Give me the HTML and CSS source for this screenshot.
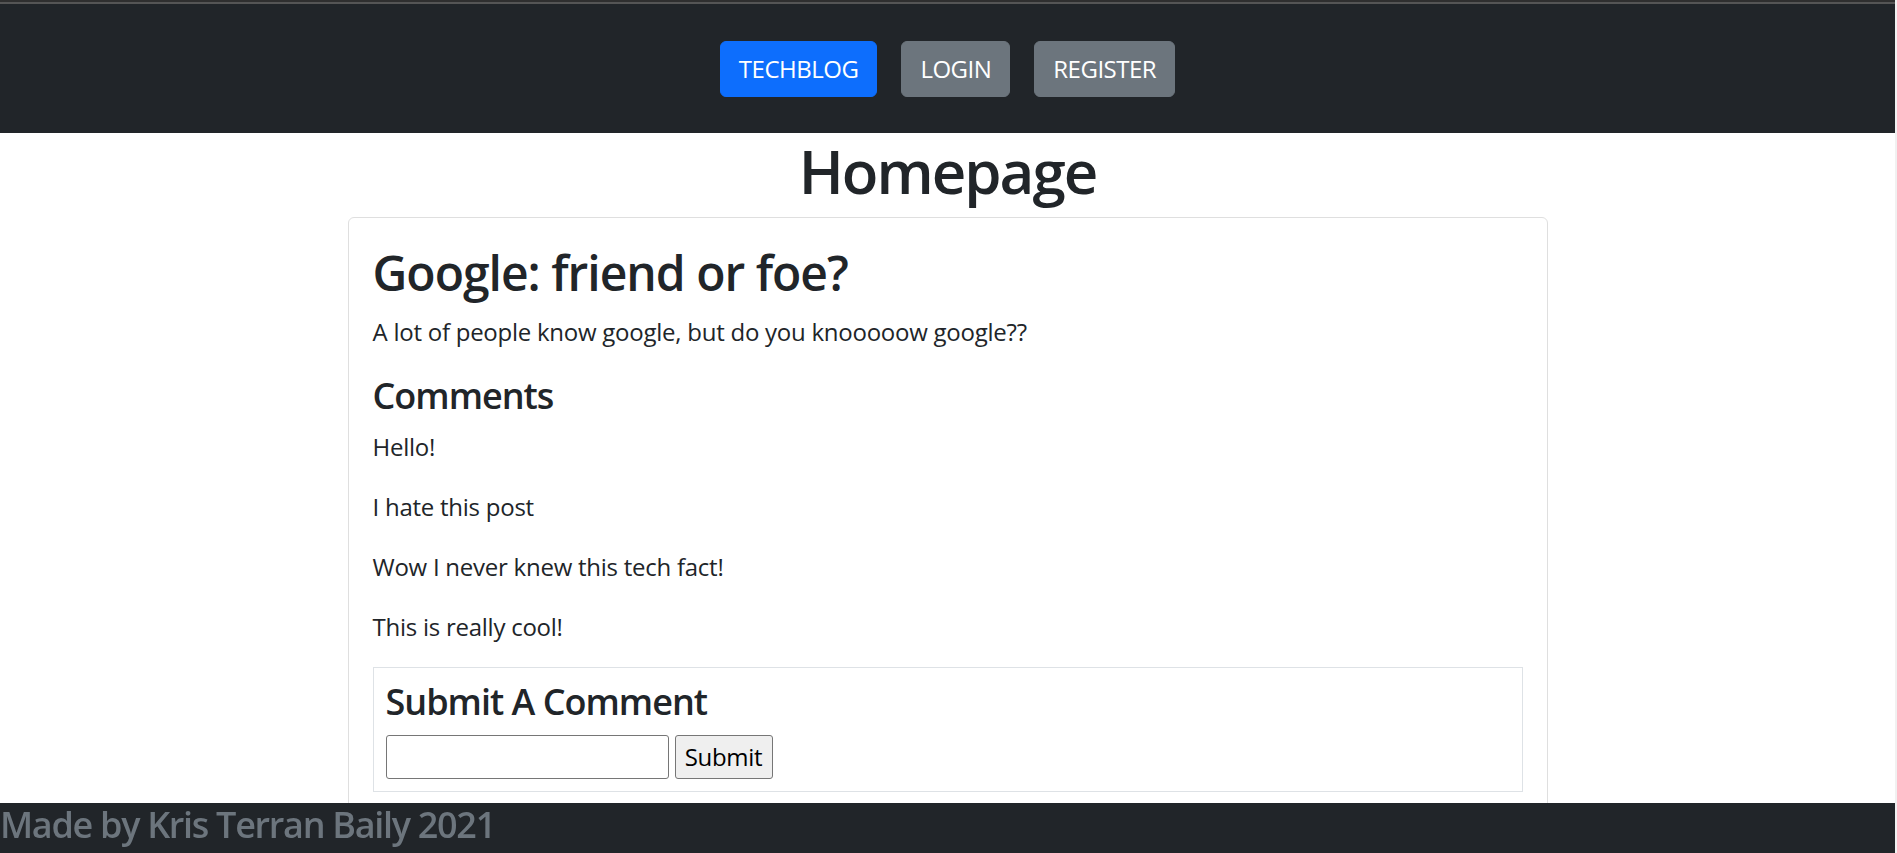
FILE: index.html
```html
<!DOCTYPE html>
<html lang="en">
<head>
<meta charset="utf-8">
<title>Tech Blog</title>
<link rel="stylesheet" href="styles.css">
</head>
<body>
<div class="chrome-top"></div>
<nav class="navbar">
  <a class="btn btn-primary" href="#">TECHBLOG</a>
  <a class="btn btn-secondary" href="#">LOGIN</a>
  <a class="btn btn-secondary" href="#">REGISTER</a>
</nav>
<main class="page">
  <h1 class="page-title">Homepage</h1>
  <article class="card">
    <div class="card-body">
      <h2 class="post-title">Google: friend or foe?</h2>
      <p class="text">A lot of people know google, but do you knooooow google??</p>
      <h4 class="section-title">Comments</h4>
      <p class="text">Hello!</p>
      <p class="text">I hate this post</p>
      <p class="text">Wow I never knew this tech fact!</p>
      <p class="text">This is really cool!</p>
      <section class="comment-box">
        <h4 class="section-title">Submit A Comment</h4>
        <form class="comment-form">
          <input class="comment-input" type="text">
          <button class="comment-submit" type="button">Submit</button>
        </form>
      </section>
    </div>
  </article>
</main>
<footer class="footer">
  <h4 class="footer-text">Made by Kris Terran Baily 2021</h4>
</footer>
</body>
</html>
```

FILE: styles.css
```css
*, *::before, *::after { box-sizing: border-box; }

html {
  background: #f1f1f1;
}

body {
  margin: 0 2px 0 0;
  background: #ffffff;
  font-family: "Open Sans", "Noto Sans", sans-serif;
  font-size: 24px;
  line-height: 1.5;
  color: #212529;
  min-height: 853px;
}

.chrome-top {
  height: 4px;
  margin-right: -2px;
  background: linear-gradient(#2f2f2f 0 2px, #555555 2px 4px);
}

.navbar {
  height: 129px;
  background: #212529;
  display: flex;
  justify-content: center;
  align-items: center;
  gap: 24px;
}

.btn {
  display: inline-block;
  padding: 9px 18px;
  border: 1px solid transparent;
  border-radius: 6px;
  font-size: 24px;
  line-height: 36px;
  color: #ffffff;
  text-decoration: none;
  letter-spacing: -0.5px;
}

.btn-primary {
  background: #0d6efd;
  border-color: #0d6efd;
}

.btn-secondary {
  background: #6c757d;
  border-color: #6c757d;
}

.page-title {
  margin: 0 0 12px;
  padding-top: 2px;
  height: 72px;
  text-align: center;
  font-size: 60px;
  font-weight: 600;
  line-height: 1.2;
  letter-spacing: -2px;
}

.card {
  width: 1200px;
  margin: 0 auto;
  border: 1px solid #dfdfdf;
  border-radius: 6px;
  background: #fff;
}

.card-body {
  padding: 26px 24px 24px;
}

.post-title {
  margin: 0 0 12px;
  font-size: 48px;
  font-weight: 600;
  line-height: 1.2;
  letter-spacing: -1px;
}

.text {
  margin: 0 0 24px;
  letter-spacing: -0.25px;
}

.section-title {
  margin: 0 0 12px;
  font-size: 36px;
  font-weight: 600;
  line-height: 1.2;
  letter-spacing: -1px;
}

.comment-box {
  border: 1px solid #dee2e6;
  padding: 12px;
  margin-top: -2px;
}

.comment-box .section-title {
  margin-bottom: 12px;
}

.comment-form {
  display: flex;
  gap: 6px;
  align-items: center;
}

.comment-input {
  width: 283px;
  height: 44px;
  margin: 0;
  padding: 1px 3px;
  border: 1px solid #767676;
  border-radius: 3px;
  font: inherit;
  background: #fff;
}

.comment-submit {
  height: 44px;
  width: 98px;
  margin: 0;
  padding: 1px 9px;
  border: 1px solid #767676;
  border-radius: 3px;
  background: #efefef;
  color: #000;
  font: inherit;
  letter-spacing: -0.3px;
}

.footer {
  position: fixed;
  left: 0;
  right: 2px;
  bottom: 0;
  height: 50px;
  background: #212529;
}

.footer-text {
  margin: 0;
  font-size: 36px;
  font-weight: 600;
  line-height: 43px;
  color: #6c757d;
  letter-spacing: -1.3px;
}
```
